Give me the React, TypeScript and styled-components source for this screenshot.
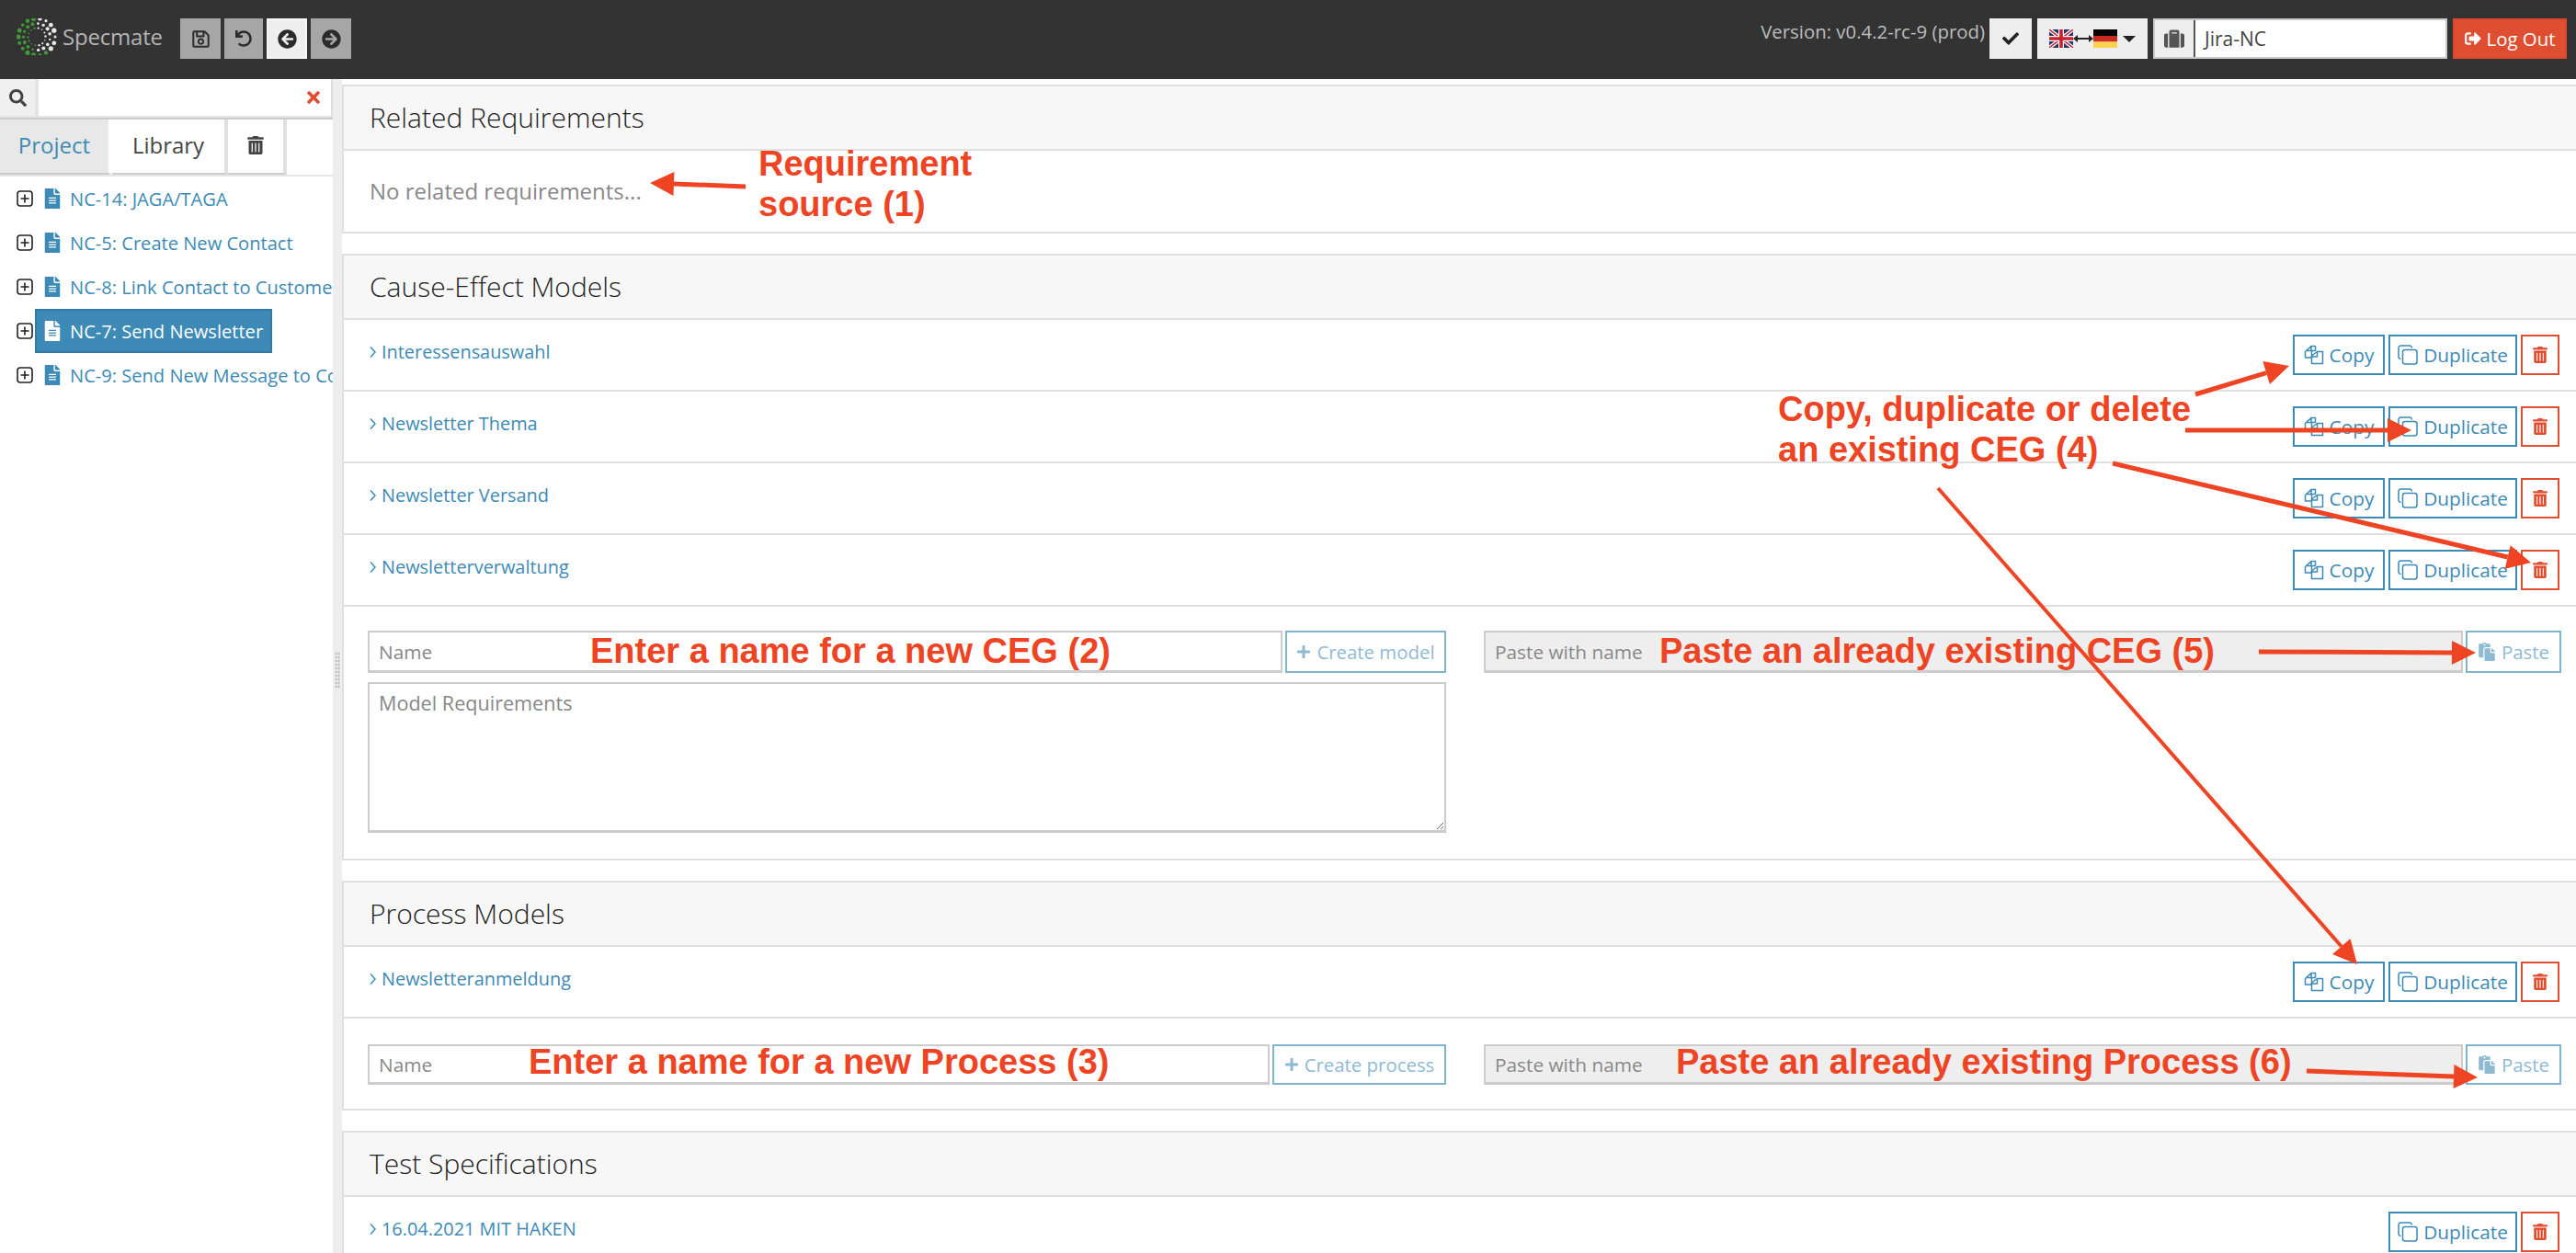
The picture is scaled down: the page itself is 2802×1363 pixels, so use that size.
import React from "react";
import styled, { createGlobalStyle } from "styled-components";
import {
  FaRegSave, FaUndo, FaArrowCircleLeft, FaArrowCircleRight, FaCheck, FaSuitcase,
  FaSignOutAlt, FaTrashAlt, FaSearch, FaTimes, FaFileAlt, FaPlus, FaPaste,
} from "react-icons/fa";

const BLUE = "#3c8ab5";
const RED = "#e04e32";
const MARK = "#ef4423";
const LINE = "#e0e0e0";

const Global = createGlobalStyle`
  html, body { margin: 0; padding: 0; background: #fff; }
  body { font-family: "Open Sans", "Liberation Sans", sans-serif; color: #444; }
  * { box-sizing: border-box; }
  input::placeholder, textarea::placeholder { color: #888; opacity: 1; }
`;

const Page = styled.div`
  position: relative;
  width: 2802px;
  height: 1363px;
  overflow: hidden;
`;

const TopBar = styled.header`
  height: 86px;
  background: #333;
  display: flex;
  align-items: flex-start;
  padding: 20px 10px 0 18px;
`;
const Brand = styled.div`
  display: flex;
  align-items: center;
  width: 178px;
  height: 40px;
  gap: 6px;
`;
const BrandName = styled.span`
  color: #b4b4b4;
  font-size: 24px;
  font-weight: 400;
  line-height: 40px;
  letter-spacing: -0.2px;
`;
const ToolGroup = styled.div`
  display: flex;
  gap: 4px;
`;
const ToolButton = styled.div<{ $active?: boolean; $w: number }>`
  width: ${(p) => p.$w}px;
  height: 44px;
  display: flex;
  align-items: center;
  justify-content: center;
  font-size: 21px;
  color: #2b2b2b;
  background: ${(p) => (p.$active ? "#eee" : "#a6a6a6")};
  border: 2px solid ${(p) => (p.$active ? "#f6f6f6" : "#a6a6a6")};
`;
const RightTools = styled.div`
  margin-left: auto;
  display: flex;
  align-items: flex-start;
  gap: 6px;
`;
const Version = styled.span`
  color: #bdbdbd;
  font-size: 20.4px;
  line-height: 28px;
  margin-right: -1px;
  white-space: nowrap;
`;
const LightButton = styled.div<{ $w: number }>`
  width: ${(p) => p.$w}px;
  height: 44px;
  background: #eee;
  display: flex;
  align-items: center;
  justify-content: center;
  color: #222;
  font-size: 18px;
`;
const Caret = styled.span`
  width: 0;
  height: 0;
  margin-left: 6px;
  border-left: 7px solid transparent;
  border-right: 7px solid transparent;
  border-top: 7px solid #222;
`;
const ProjectGroup = styled.div`
  width: 320px;
  height: 44px;
  display: flex;
  background: #fff;
  border: 2px solid #c8c8c8;
`;
const ProjectIcon = styled.div`
  width: 44px;
  background: #eee;
  border-right: 2px solid #555;
  display: flex;
  align-items: center;
  justify-content: center;
  color: #555;
  font-size: 22px;
`;
const ProjectName = styled.div`
  flex: 1;
  padding-left: 10px;
  font-size: 21px;
  line-height: 40px;
  color: #444;
`;
const LogOut = styled.div`
  width: 124px;
  height: 44px;
  background: ${RED};
  border: 2px solid #d8482d;
  color: #fff;
  font-size: 20.4px;
  display: flex;
  align-items: center;
  justify-content: center;
  gap: 6px;
`;

const Main = styled.div`
  display: flex;
  height: 1277px;
`;
const Sidebar = styled.aside`
  width: 362px;
  flex: none;
  overflow: hidden;
`;
const SearchRow = styled.div`
  display: flex;
  height: 44px;
  background: #e4e4e4;
  padding-bottom: 4px;
  border-bottom: 2px solid #ccc;
`;
const SearchAddon = styled.div`
  width: 38px;
  background: #f0f0f0;
  display: flex;
  align-items: center;
  justify-content: center;
  color: #444;
  font-size: 19px;
  margin-right: 4px;
  height: 40px;
`;
const SearchField = styled.div`
  flex: 1;
  height: 40px;
  background: #fff;
  display: flex;
  align-items: center;
  justify-content: flex-end;
  padding-right: 9px;
  color: ${RED};
  font-size: 20px;
  border-right: 2px solid #ddd;
`;
const TabBar = styled.div`
  display: flex;
  height: 62px;
  border-bottom: 2px solid #e6e6e6;
`;
const Tab = styled.div<{ $active?: boolean; $w: number }>`
  width: ${(p) => p.$w}px;
  height: 60px;
  display: flex;
  align-items: center;
  justify-content: center;
  font-size: 24px;
  line-height: 56px;
  padding-bottom: 2px;
  color: ${(p) => (p.$active ? BLUE : "#444")};
  background: ${(p) => (p.$active ? "#e8e8e8" : "#fff")};
  border-right: 4px solid ${(p) => (p.$active ? "#fff" : "#e0e0e0")};
  border-bottom: 2px solid #ccc;
`;
const Tree = styled.ul`
  list-style: none;
  margin: 0;
  padding: 0 0 0 18px;
`;
const TreeRow = styled.li`
  height: 48px;
  display: flex;
  align-items: center;
  white-space: nowrap;
`;
const Expander = styled.svg`
  width: 18px;
  height: 18px;
  flex: none;
`;
const TreeLabel = styled.div<{ $selected?: boolean }>`
  display: flex;
  align-items: center;
  gap: 8px;
  height: 48px;
  margin-left: 2px;
  padding: 0 ${(p) => (p.$selected ? "8px" : "0")} 0 6px;
  font-size: 20.1px;
  color: ${(p) => (p.$selected ? "#fff" : BLUE)};
  background: ${(p) => (p.$selected ? BLUE : "transparent")};
  border: 2px solid ${(p) => (p.$selected ? "#2f7ba6" : "transparent")};
  svg { font-size: 22px; flex: none; }
`;

const Splitter = styled.div`
  width: 10px;
  flex: none;
  background: #eee;
  display: flex;
  align-items: center;
  justify-content: center;
`;
const Grip = styled.div`
  width: 6px;
  height: 40px;
  margin-top: 8px;
  background-image: radial-gradient(#c8c8c8 1px, transparent 1.4px);
  background-size: 3px 4px;
`;

const Content = styled.main`
  flex: 1;
  padding-top: 6px;
  overflow: hidden;
`;
const Card = styled.section`
  border: 2px solid ${LINE};
  border-right: none;
  margin-bottom: 22px;
`;
const CardHeader = styled.h2`
  margin: 0;
  height: 70px;
  background: #f7f7f7;
  border-bottom: 2px solid ${LINE};
  padding-left: 28px;
  font-size: 30px;
  font-weight: 300;
  line-height: 68px;
  color: #222;
`;
const NoteBody = styled.div`
  height: 88px;
  padding-left: 28px;
  font-size: 24px;
  line-height: 88px;
  color: #888;
`;
const Row = styled.div`
  display: flex;
  align-items: flex-start;
  padding: 16px 18px 16px 28px;
  height: 78px;
  border-bottom: 2px solid ${LINE};
`;
const LastRow = styled(Row)`
  border-bottom: none;
`;
const RowLink = styled.div`
  color: ${BLUE};
  font-size: 19.9px;
  line-height: 38px;
  display: flex;
  align-items: center;
  gap: 6px;
  height: 38px;
`;
const Chevron = styled.svg`
  width: 7px;
  height: 14px;
  flex: none;
`;
const Actions = styled.div`
  margin-left: auto;
  display: flex;
  gap: 4px;
`;
const ActionButton = styled.div<{ $w: number; $danger?: boolean }>`
  width: ${(p) => p.$w}px;
  height: 44px;
  display: flex;
  align-items: center;
  justify-content: center;
  gap: 6px;
  font-size: 20.8px;
  color: ${(p) => (p.$danger ? RED : BLUE)};
  border: 2px solid ${(p) => (p.$danger ? RED : BLUE)};
  background: #fff;
`;
const FormRow = styled.div<{ $bottom: number; $top: number }>`
  display: flex;
  align-items: flex-start;
  justify-content: space-between;
  padding: ${(p) => p.$top}px 16px ${(p) => p.$bottom}px 26px;
`;
const FormColumn = styled.div`
  width: 1173px;
  display: flex;
  flex-direction: column;
  gap: 10px;
`;
const InputLine = styled.div`
  display: flex;
  gap: 3px;
`;
const TextInput = styled.input<{ $h?: number; $muted?: boolean }>`
  flex: 1;
  min-width: 0;
  height: ${(p) => p.$h ?? 46}px;
  padding: 0 10px;
  border: 2px solid #ccc;
  border-bottom-width: 3px;
  background: ${(p) => (p.$muted ? "#eee" : "#fff")};
  font: 400 20.8px "Open Sans", sans-serif;
  color: #444;
  outline: none;
`;
const TextArea = styled.textarea`
  display: block;
  width: 100%;
  height: 164px;
  padding: 6px 10px;
  border: 2px solid #ccc;
  border-bottom-width: 3px;
  background: #fff;
  font: 400 21.6px/30px "Open Sans", sans-serif;
  outline: none;
`;
const PasteColumn = styled.div`
  width: 1172px;
`;
const GhostButton = styled.div<{ $w: number; $h?: number }>`
  width: ${(p) => p.$w}px;
  height: ${(p) => p.$h ?? 46}px;
  flex: none;
  display: flex;
  align-items: center;
  justify-content: center;
  gap: 6px;
  font-size: 20.4px;
  color: #8fbad3;
  border: 2px solid #7fb3d0;
  background: #fff;
`;

const Overlay = styled.svg`
  position: absolute;
  inset: 0;
  width: 2802px;
  height: 1363px;
  pointer-events: none;
`;
const Note = styled.div<{ $x: number; $y: number }>`
  position: absolute;
  left: ${(p) => p.$x}px;
  top: ${(p) => p.$y}px;
  font: 700 38px/44px "Liberation Sans", Arial, sans-serif;
  color: ${MARK};
  white-space: nowrap;
  pointer-events: none;
`;

const Logo = () => {
  const dots: React.ReactNode[] = [];
  [[20, 2.2, 18], [14.5, 1.7, 15], [9.5, 1, 14]].forEach(([r, s, n], ring) => {
    for (let i = 0; i < n; i++) {
      const a = (i / n) * Math.PI * 2 + ring * 0.2;
      const x = 22 + r * Math.cos(a);
      const y = 20 + r * Math.sin(a);
      const green = Math.cos(a) < -0.05 || (Math.sin(a) > 0.85 && ring === 0);
      const size = s * (0.7 + 0.5 * Math.abs(Math.sin(i * 2.3)));
      dots.push(<circle key={`${ring}-${i}`} cx={x} cy={y} r={size} fill={green ? "#3f9a36" : "#e6e6e6"} />);
    }
  });
  return <svg width="44" height="40" viewBox="0 0 44 40">{dots}</svg>;
};

const PlusBox = () => (
  <Expander viewBox="0 0 18 18">
    <rect x="1" y="1" width="16" height="16" rx="3" fill="#fff" stroke="#222" strokeWidth="1.6" />
    <path d="M9 4.5v9M4.5 9h9" stroke="#222" strokeWidth="1.6" />
  </Expander>
);

const RowChevron = () => (
  <Chevron viewBox="0 0 7 14" fill="none" stroke={BLUE} strokeWidth="1.5">
    <path d="M1 1.5L6 7l-5 5.5" />
  </Chevron>
);

const CopyIcon = () => (
  <svg width="22" height="22" viewBox="0 0 22 22" fill="none" stroke="currentColor" strokeWidth="1.5" strokeLinejoin="round">
    <path d="M8 1.5h4.5v5H8.5v7.5H1.5V7.5zM8 1.5v5H2" />
    <path d="M14.5 7.5H20.5v13H8.5v-7h0V12l6-4.5zM14.5 7.5v5.5h-6" />
  </svg>
);
const DuplicateIcon = () => (
  <svg width="22" height="22" viewBox="0 0 22 22" fill="none" stroke="currentColor" strokeWidth="1.5">
    <path d="M3.5 15.5A2.5 2.5 0 0 1 1 13V3.5A2.5 2.5 0 0 1 3.5 1H13a2.5 2.5 0 0 1 2.5 2.5" />
    <rect x="5.5" y="5.5" width="15.5" height="15.5" rx="2.5" />
  </svg>
);
const UkFlag = () => (
  <svg width="26" height="20" viewBox="0 0 26 20">
    <rect width="26" height="20" fill="#24356f" />
    <path d="M0 0l26 20M26 0L0 20" stroke="#fff" strokeWidth="4" />
    <path d="M0 0l26 20M26 0L0 20" stroke="#c8202f" strokeWidth="1.4" />
    <path d="M13 0v20M0 10h26" stroke="#fff" strokeWidth="6" />
    <path d="M13 0v20M0 10h26" stroke="#c8202f" strokeWidth="3.6" />
  </svg>
);
const DeFlag = () => (
  <svg width="26" height="20" viewBox="0 0 26 20">
    <rect width="26" height="7" fill="#000" />
    <rect y="7" width="26" height="6.5" fill="#cc2a1c" />
    <rect y="13.5" width="26" height="6.5" fill="#fcd14d" />
  </svg>
);
const Swap = () => (
  <svg width="22" height="12" viewBox="0 0 22 12">
    <path d="M3 6h16" stroke="#222" strokeWidth="2" />
    <path d="M0 6l5-4v8zM22 6l-5-4v8z" fill="#222" />
  </svg>
);

const Arrow = ({ from, to, w = 5, head = 26, half = 13 }: { from: [number, number]; to: [number, number]; w?: number; head?: number; half?: number }) => {
  const dx = to[0] - from[0];
  const dy = to[1] - from[1];
  const len = Math.hypot(dx, dy);
  const ux = dx / len;
  const uy = dy / len;
  const bx = to[0] - ux * head;
  const by = to[1] - uy * head;
  const pts = `${to[0]},${to[1]} ${bx - uy * half},${by + ux * half} ${bx + uy * half},${by - ux * half}`;
  return (
    <g>
      <line x1={from[0]} y1={from[1]} x2={bx} y2={by} stroke={MARK} strokeWidth={w} />
      <polygon points={pts} fill={MARK} />
    </g>
  );
};

const treeItems = ["NC-14: JAGA/TAGA", "NC-5: Create New Contact", "NC-8: Link Contact to Customer", "NC-7: Send Newsletter", "NC-9: Send New Message to Contact"];
const cegModels = ["Interessensauswahl", "Newsletter Thema", "Newsletter Versand", "Newsletterverwaltung"];

const ModelActions = ({ copy = true }: { copy?: boolean }) => (
  <Actions>
    {copy && <ActionButton $w={100}><CopyIcon />Copy</ActionButton>}
    <ActionButton $w={140}><DuplicateIcon />Duplicate</ActionButton>
    <ActionButton $w={42} $danger><FaTrashAlt size={18} /></ActionButton>
  </Actions>
);

export default function App() {
  return (
    <Page>
      <Global />
      <TopBar>
        <Brand><Logo /><BrandName>Specmate</BrandName></Brand>
        <ToolGroup>
          <ToolButton $w={44}><FaRegSave /></ToolButton>
          <ToolButton $w={42}><FaUndo size={18} /></ToolButton>
          <ToolButton $w={44} $active><FaArrowCircleLeft /></ToolButton>
          <ToolButton $w={44}><FaArrowCircleRight /></ToolButton>
        </ToolGroup>
        <RightTools>
          <Version>Version: v0.4.2-rc-9 (prod)</Version>
          <LightButton $w={46}><FaCheck /></LightButton>
          <LightButton $w={120}><UkFlag /><Swap /><DeFlag /><Caret /></LightButton>
          <ProjectGroup>
            <ProjectIcon><FaSuitcase /></ProjectIcon>
            <ProjectName>Jira-NC</ProjectName>
          </ProjectGroup>
          <LogOut><FaSignOutAlt size={18} />Log Out</LogOut>
        </RightTools>
      </TopBar>
      <Main>
        <Sidebar>
          <SearchRow>
            <SearchAddon><FaSearch /></SearchAddon>
            <SearchField><FaTimes /></SearchField>
          </SearchRow>
          <TabBar>
            <Tab $w={122} $active>Project</Tab>
            <Tab $w={126}>Library</Tab>
            <Tab $w={64}><FaTrashAlt size={20} /></Tab>
          </TabBar>
          <Tree>
            {treeItems.map((t, i) => (
              <TreeRow key={t}>
                <PlusBox />
                <TreeLabel $selected={i === 3}><FaFileAlt />{t}</TreeLabel>
              </TreeRow>
            ))}
          </Tree>
        </Sidebar>
        <Splitter><Grip /></Splitter>
        <Content>
          <Card>
            <CardHeader>Related Requirements</CardHeader>
            <NoteBody>No related requirements...</NoteBody>
          </Card>
          <Card>
            <CardHeader>Cause-Effect Models</CardHeader>
            {cegModels.map((m) => (
              <Row key={m}>
                <RowLink><RowChevron />{m}</RowLink>
                <ModelActions />
              </Row>
            ))}
            <FormRow $top={26} $bottom={28}>
              <FormColumn>
                <InputLine>
                  <TextInput placeholder="Name" />
                  <GhostButton $w={175}><FaPlus size={16} />Create model</GhostButton>
                </InputLine>
                <TextArea placeholder="Model Requirements" />
              </FormColumn>
              <PasteColumn>
                <InputLine>
                  <TextInput $muted placeholder="Paste with name" />
                  <GhostButton $w={104}><FaPaste size={20} />Paste</GhostButton>
                </InputLine>
              </PasteColumn>
            </FormRow>
          </Card>
          <Card>
            <CardHeader>Process Models</CardHeader>
            <Row>
              <RowLink><RowChevron />Newsletteranmeldung</RowLink>
              <ModelActions />
            </Row>
            <FormRow $top={28} $bottom={26}>
              <FormColumn>
                <InputLine>
                  <TextInput $h={44} placeholder="Name" />
                  <GhostButton $w={189} $h={44}><FaPlus size={16} />Create process</GhostButton>
                </InputLine>
              </FormColumn>
              <PasteColumn>
                <InputLine>
                  <TextInput $h={44} $muted placeholder="Paste with name" />
                  <GhostButton $w={104} $h={44}><FaPaste size={20} />Paste</GhostButton>
                </InputLine>
              </PasteColumn>
            </FormRow>
          </Card>
          <Card>
            <CardHeader>Test Specifications</CardHeader>
            <LastRow>
              <RowLink><RowChevron />16.04.2021 MIT HAKEN</RowLink>
              <ModelActions copy={false} />
            </LastRow>
          </Card>
        </Content>
      </Main>
      <Overlay viewBox="0 0 2802 1363">
        <Arrow from={[811, 203]} to={[707, 199]} />
        <Arrow from={[2388, 429]} to={[2490, 398]} />
        <Arrow from={[2377, 468]} to={[2623, 468]} />
        <Arrow from={[2298, 504]} to={[2753, 612]} />
        <Arrow from={[2108, 531]} to={[2564, 1049]} w={4} />
        <Arrow from={[2457, 709]} to={[2693, 710]} />
        <Arrow from={[2509, 1165]} to={[2695, 1172]} />
      </Overlay>
      <Note $x={825} $y={156}>Requirement<br />source (1)</Note>
      <Note $x={1934} $y={423}>Copy, duplicate or delete<br />an existing CEG (4)</Note>
      <Note $x={642} $y={686}>Enter a name for a new CEG (2)</Note>
      <Note $x={1805} $y={686}>Paste an already existing CEG (5)</Note>
      <Note $x={575} $y={1133}>Enter a name for a new Process (3)</Note>
      <Note $x={1823} $y={1133}>Paste an already existing Process (6)</Note>
    </Page>
  );
}
